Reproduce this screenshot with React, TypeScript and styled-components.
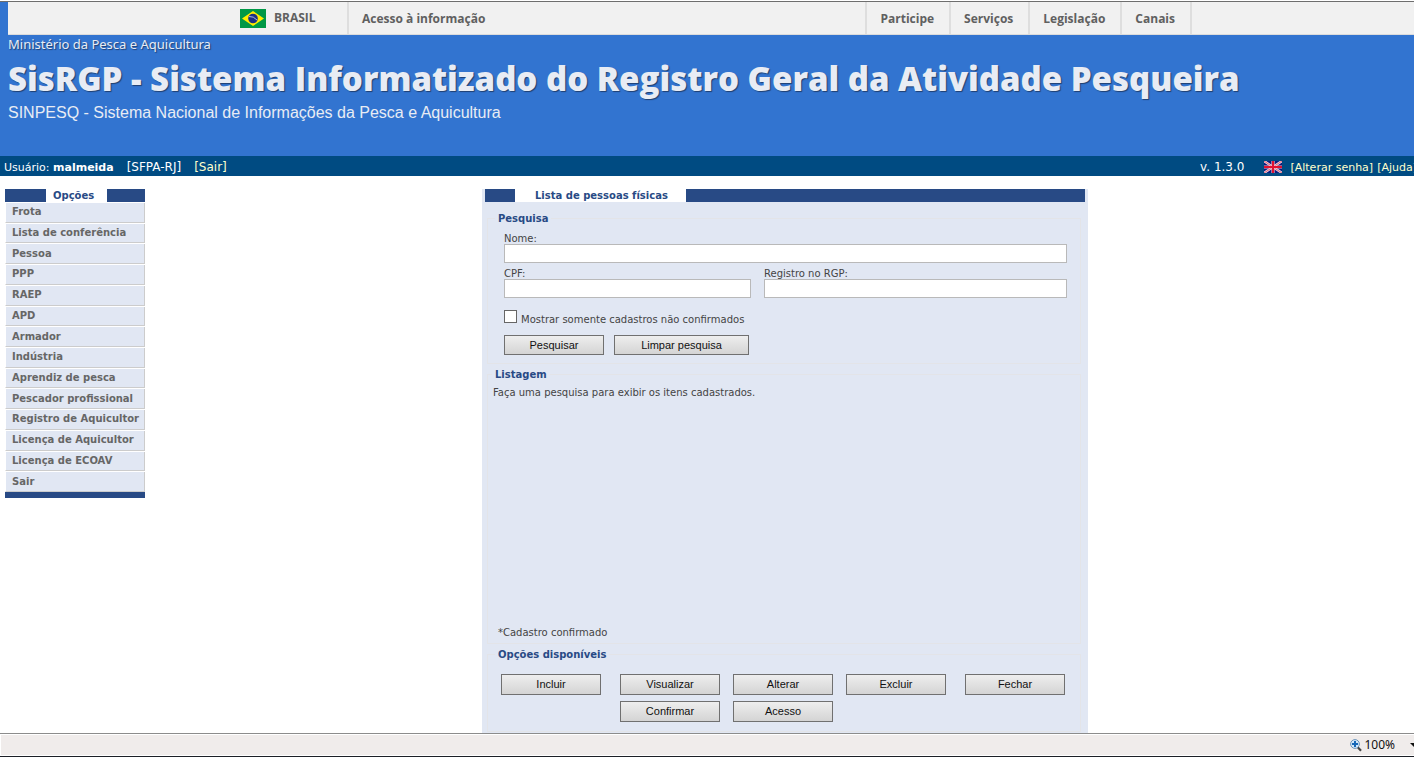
import React from "react";
import styled, { createGlobalStyle } from "styled-components";

const verdana = `Verdana, "DejaVu Sans", sans-serif`;
const openSans = `"Open Sans", "Noto Sans", sans-serif`;
const arial = `"Liberation Sans", Arial, sans-serif`;

const GlobalStyle = createGlobalStyle`
  *, *::before, *::after { box-sizing: border-box; }
  body { margin: 0; background: #fff; color: #444; font: 10px/12px ${verdana}; overflow-x: hidden; }
  a { color: inherit; text-decoration: none; }
  h1, h2, p, ul { margin: 0; padding: 0; font-weight: normal; }
  ul { list-style: none; }
`;

const Page = styled.div`
  display: flex;
  flex-direction: column;
  min-height: 100vh;
  padding-top: 1px;
`;

const Header = styled.header`
  height: 155px;
  padding-left: 8px;
  background: #3274d0;
  border-top: 1px solid #6e6e6e;
  color: #e8ecf4;
`;

const GovBar = styled.nav`
  height: 33px;
  padding-left: 8px;
  background: #f1f1f1;
  border-bottom: 1px solid #dcdcdc;
`;

const GovInner = styled.div`
  display: flex;
  align-items: stretch;
  width: 950px;
  max-width: 100%;
  height: 100%;
  margin: 0 auto;
  font: bold 12px/34px ${openSans};
  color: #606060;
`;

const Country = styled.a`
  display: flex;
  align-items: center;
  gap: 8px;
  width: 107px;
`;

const GovLink = styled.a`
  height: 32px;
  padding: 0 15px 0 13px;
  border-left: 2px solid #dedede;
`;

const GovLinks = styled.div`
  display: flex;
  height: 32px;
  margin: 0 -2px 0 auto;
  border-right: 2px solid #dedede;
`;

const Ministry = styled.p`
  font: 13px/18px "Noto Sans", sans-serif;
  text-shadow: 1px 1px 1px #1f3f70;
`;

const Title = styled.h1`
  padding-top: 2px;
  font: 800 33px/48px ${openSans};
  text-shadow: 1px 1px 1px #1f3f70;
  white-space: nowrap;
`;

const Subtitle = styled.p`
  font: 16px/20px ${arial};
`;

const UserBar = styled.div`
  display: flex;
  align-items: center;
  flex-shrink: 0;
  height: 20px;
  padding: 2px 0 0 4px;
  background: #004b82;
  color: #fff;
  font: 11px/16px ${verdana};
  white-space: nowrap;
  overflow: hidden;
`;

const UserInfo = styled.div`
  display: flex;
  align-items: baseline;
  gap: 13px;
  padding-top: 1px;
`;

const UserActions = styled.div`
  display: flex;
  align-items: center;
  gap: 4px;
  margin: 0 -3px 0 auto;
`;

const Version = styled.span`
  margin-right: 16px;
  padding-bottom: 1px;
  font-size: 12px;
`;

const Bracketed = styled.span`
  font-size: 12px;
`;

const ExitLink = styled.a`
  color: #ffffcc;
  font-size: 12px;
`;

const AccountLinks = styled.div`
  display: flex;
  gap: 4px;
  margin-left: 4px;
  padding-top: 2px;
  color: #ffffcc;
`;

const Body = styled.div`
  display: flex;
  flex: 1;
  align-items: flex-start;
  gap: 11px;
  padding: 13px 0 0 5px;
`;

const Menu = styled.nav`
  flex: 0 0 140px;
  border-bottom: 6px solid #284a85;
`;

const TabBar = styled.div<{ $before: number }>`
  display: flex;
  height: 13px;
  background: #284a85;
  padding-left: ${(p) => p.$before}px;
`;

const Tab = styled.h2<{ $left: number; $right: number }>`
  padding: 0 ${(p) => p.$right}px 0 ${(p) => p.$left}px;
  background: #fff;
  color: #284a85;
  font: bold 10px/13px ${verdana};
`;

const MenuList = styled.ul`
  display: grid;
  grid-auto-rows: 1fr;
  height: 290px;
`;

const MenuItem = styled.li`
  border-top: 1px solid #fff;
`;

const MenuLink = styled.a`
  display: flex;
  align-items: center;
  height: 100%;
  padding-left: 6px;
  background: #e1e7f3;
  border: 1px solid #ccc;
  border-top: 0;
  border-left-color: #fff;
  color: #666;
  font-weight: bold;
  white-space: nowrap;
`;

const Content = styled.main`
  flex: 1;
  display: flex;
  justify-content: center;
`;

const Panel = styled.div`
  width: 606px;
  padding: 0 3px;
  background: #e1e7f3;
`;

const Groups = styled.div`
  display: flex;
  flex-direction: column;
  gap: 3px;
  padding: 9px 4px 1px 2px;
`;

const Group = styled.fieldset<{ $legend?: number }>`
  min-width: 0;
  margin: 0;
  padding: 0;
  border: 1px solid #e3e4e8;

  & > legend {
    margin-left: ${(p) => p.$legend ?? 7}px;
    padding: 2px 3px 0;
    color: #284a85;
    font: bold 10px/12px ${verdana};
  }
`;

const SearchForm = styled.form`
  padding: 7px 13px 8px 16px;
`;

const Fields = styled.div`
  display: flex;
  gap: 13px;
  margin-bottom: 4px;
`;

const Field = styled.label<{ $grow: number }>`
  flex: ${(p) => p.$grow} 1 0;
  min-width: 0;
  padding-top: 2px;
  line-height: 10px;
`;

const TextInput = styled.input`
  display: block;
  width: 100%;
  height: 19px;
  padding: 0 3px;
  background: #fff;
  border: 1px solid #b9b9b9;
  border-radius: 0;
  font: 11px/16px ${arial};
`;

const CheckRow = styled.label`
  display: flex;
  gap: 4px;
  height: 16px;
  margin: 12px 0 9px;

  & > span { align-self: flex-end; }
`;

const CheckBox = styled.input`
  appearance: none;
  width: 13px;
  height: 13px;
  margin: 0;
  background: #fff;
  border: 1px solid #666;

  &:checked { background: #284a85; box-shadow: inset 0 0 0 2px #fff; }
`;

const ButtonRow = styled.div`
  display: flex;
  gap: 10px;
`;

const Button = styled.button<{ $width?: number; $height?: number }>`
  width: ${(p) => p.$width ?? 100}px;
  height: ${(p) => p.$height ?? 21}px;
  padding: 0 0 1px;
  background: linear-gradient(#eee, #d4d4d4);
  border: 1px solid #707070;
  color: #111;
  font: 11px/16px ${arial};
`;

const Listing = styled.div`
  display: flex;
  flex-direction: column;
  justify-content: space-between;
  min-height: 262px;
  padding: 6px 5px 4px;
`;

const Note = styled.p`
  padding-left: 5px;
`;

const Actions = styled.div`
  display: grid;
  grid-template-columns: 1fr 113px 113px 113px 1fr;
  row-gap: 6px;
  justify-items: center;
  padding: 13px 15px 9px 13px;

  & > :first-child { justify-self: start; }
  & > :nth-child(5) { justify-self: end; }
  & > :nth-child(6) { grid-column: 2; }
`;

const StatusBar = styled.footer`
  display: flex;
  align-items: center;
  justify-content: flex-end;
  height: 24px;
  background: #f0eceb;
  border-top: 1px solid #8c8c8c;
  border-bottom: 1px solid #1c1f26;
  box-shadow: inset 1px 1px #fff, inset 0 -1px #fff;
  overflow: hidden;
`;

const Zoom = styled.button`
  display: flex;
  align-items: center;
  gap: 2px;
  margin-right: -4px;
  padding: 0;
  background: none;
  border: 0;
  color: #111;
  font: 12px/16px "Noto Sans", sans-serif;

  & > :last-child { margin-left: 13px; }
`;

const menu = [
  "Frota", "Lista de conferência", "Pessoa", "PPP", "RAEP", "APD", "Armador",
  "Indústria", "Aprendiz de pesca", "Pescador profissional",
  "Registro de Aquicultor", "Licença de Aquicultor", "Licença de ECOAV", "Sair",
];

const actions = ["Incluir", "Visualizar", "Alterar", "Excluir", "Fechar", "Confirmar", "Acesso"];

const BrazilFlag = () => (
  <svg width="26" height="19" viewBox="0 0 26 19" aria-hidden="true">
    <rect width="26" height="19" fill="#009846" />
    <path d="M13 2L24 9.500L13 17L2 9.500Z" fill="#ffec00" />
    <circle cx="13" cy="9.500" r="4.800" fill="#1c2f83" />
    <path d="M9 7.500Q13.500 7 17 11" fill="none" stroke="#b9cbe6" strokeWidth="0.900" />
  </svg>
);

const UkFlag = () => (
  <svg width="18" height="12" viewBox="0 0 18 12" aria-hidden="true">
    <rect width="18" height="12" fill="#0a1a80" />
    <path d="M0 0L18 12M18 0L0 12" stroke="#f3d6dc" strokeWidth="2.400" />
    <path d="M0 0L18 12M18 0L0 12" stroke="#d8405a" strokeWidth="0.800" />
    <path d="M9 0V12M0 6H18" stroke="#f3b6c2" strokeWidth="3.200" />
    <path d="M9 0V12M0 6H18" stroke="#e01030" strokeWidth="2" />
  </svg>
);

const MagnifierIcon = () => (
  <svg width="12" height="13" viewBox="0 0 12 13" aria-hidden="true">
    <path d="M7.500 8L11 11.800" stroke="#444" strokeWidth="2.200" />
    <circle cx="5" cy="5" r="4.400" fill="#d3e8fa" stroke="#6c93b8" />
    <path d="M5 2V8M2 5H8" stroke="#1667b8" strokeWidth="2" />
  </svg>
);

const CaretIcon = () => (
  <svg width="8" height="4" viewBox="0 0 8 4" aria-hidden="true">
    <path d="M0 0H8L4 4Z" fill="#111" />
  </svg>
);

export default function App() {
  return (
    <Page>
      <GlobalStyle />
      <Header>
        <GovBar>
          <GovInner>
            <Country href="#"><BrazilFlag />BRASIL</Country>
            <GovLink href="#">Acesso à informação</GovLink>
            <GovLinks>
              <GovLink href="#">Participe</GovLink>
              <GovLink href="#">Serviços</GovLink>
              <GovLink href="#">Legislação</GovLink>
              <GovLink href="#">Canais</GovLink>
            </GovLinks>
          </GovInner>
        </GovBar>
        <Ministry>Ministério da Pesca e Aquicultura</Ministry>
        <Title>SisRGP - Sistema Informatizado do Registro Geral da Atividade Pesqueira</Title>
        <Subtitle>SINPESQ - Sistema Nacional de Informações da Pesca e Aquicultura</Subtitle>
      </Header>

      <UserBar>
        <UserInfo>
          <span>Usuário: <b>malmeida</b></span>
          <Bracketed>[SFPA-RJ]</Bracketed>
          <ExitLink href="#">[Sair]</ExitLink>
        </UserInfo>
        <UserActions>
          <Version>v. 1.3.0</Version>
          <UkFlag />
          <AccountLinks>
            <a href="#">[Alterar senha]</a>
            <a href="#">[Ajuda]</a>
          </AccountLinks>
        </UserActions>
      </UserBar>

      <Body>
        <Menu>
          <TabBar $before={41}><Tab $left={7} $right={13}>Opções</Tab></TabBar>
          <MenuList>
            {menu.map((item) => (
              <MenuItem key={item}><MenuLink href="#">{item}</MenuLink></MenuItem>
            ))}
          </MenuList>
        </Menu>

        <Content>
          <Panel>
            <TabBar $before={30}><Tab $left={20} $right={18}>Lista de pessoas físicas</Tab></TabBar>
            <Groups>
              <Group>
                <legend>Pesquisa</legend>
                <SearchForm onSubmit={(e) => e.preventDefault()}>
                  <Fields>
                    <Field $grow={1}>Nome:<TextInput type="text" /></Field>
                  </Fields>
                  <Fields>
                    <Field $grow={247}>CPF:<TextInput type="text" /></Field>
                    <Field $grow={303}>Registro no RGP:<TextInput type="text" /></Field>
                  </Fields>
                  <CheckRow>
                    <CheckBox type="checkbox" />
                    <span>Mostrar somente cadastros não confirmados</span>
                  </CheckRow>
                  <ButtonRow>
                    <Button type="submit" $height={20}>Pesquisar</Button>
                    <Button type="reset" $width={135} $height={20}>Limpar pesquisa</Button>
                  </ButtonRow>
                </SearchForm>
              </Group>

              <Group $legend={4}>
                <legend>Listagem</legend>
                <Listing>
                  <p>Faça uma pesquisa para exibir os itens cadastrados.</p>
                  <Note>*Cadastro confirmado</Note>
                </Listing>
              </Group>

              <Group>
                <legend>Opções disponíveis</legend>
                <Actions>
                  {actions.map((label) => <Button key={label} type="button">{label}</Button>)}
                </Actions>
              </Group>
            </Groups>
          </Panel>
        </Content>
      </Body>

      <StatusBar>
        <Zoom type="button"><MagnifierIcon /><span>100%</span><CaretIcon /></Zoom>
      </StatusBar>
    </Page>
  );
}
